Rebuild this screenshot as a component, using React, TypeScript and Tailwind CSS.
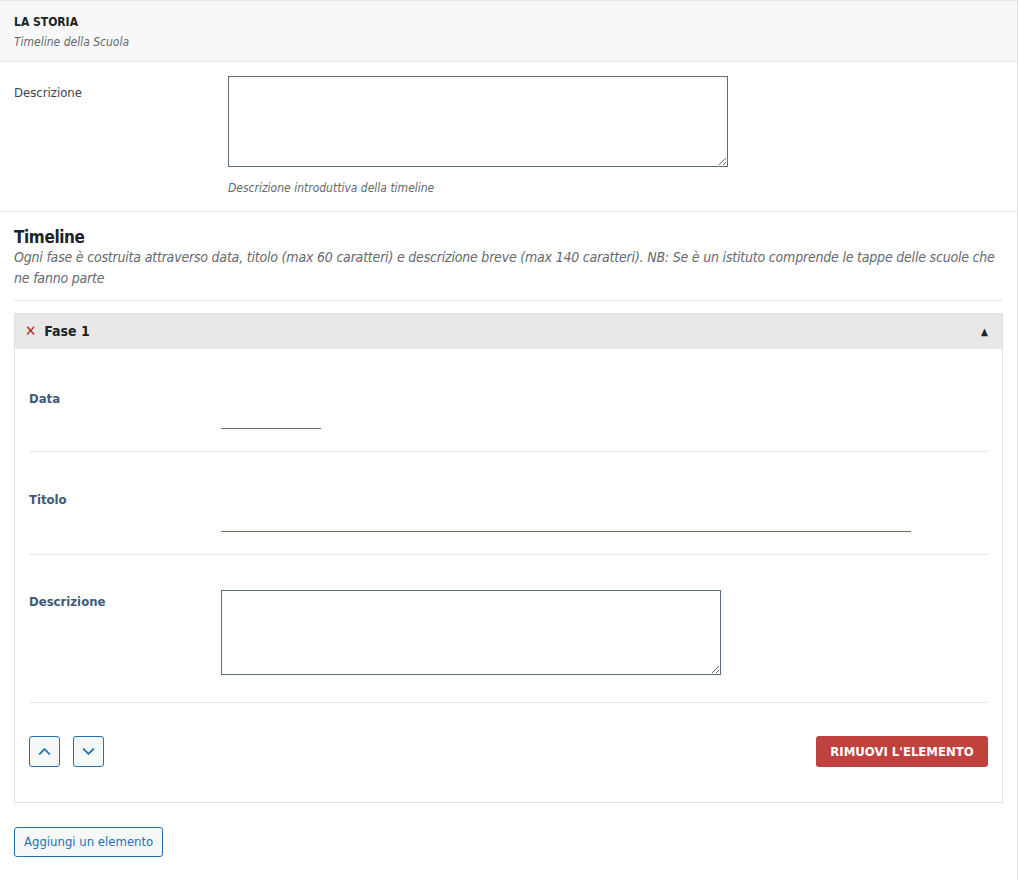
import { ChevronUp, ChevronDown } from "lucide-react";

const font = "font-['Tahoma','DejaVu_Sans_Condensed','DejaVu_Sans',sans-serif]";

export default function App() {
  return (
    <div className={`${font} w-[1018px] bg-white text-[13px] text-[#3c434a]`}>
      <div className="border-t border-r border-[#e5e5e5]">
        {/* section header */}
        <div className="h-[61px] border-b border-[#e5e5e5] bg-[#f8f8f8] px-[14px] pt-[13px]">
          <div className="text-[12px] font-bold leading-[16px] text-[#1d2327]">LA STORIA</div>
          <div className="mt-[4px] text-[12px] italic leading-[16px] text-[#646970]">Timeline della Scuola</div>
        </div>

        {/* descrizione */}
        <div className="flex border-b border-[#e5e5e5] px-[14px] pt-[14px] pb-[14px]">
          <div className="w-[214px] shrink-0 pt-[7px] text-[13px] text-[#3c434a]">Descrizione</div>
          <div>
            <textarea className="block h-[91px] w-[500px] rounded-none border border-[#5b6d85] bg-white" />
            <p className="mt-[12px] text-[12px] italic text-[#646970]">Descrizione introduttiva della timeline</p>
          </div>
        </div>

        {/* timeline */}
        <div className="px-[14px] pt-[15px] pb-[22px]">
          <h2 className="text-[17px] font-bold leading-[20px] tracking-[-0.4px] text-[#1d2327]">
            Timeline
          </h2>
          <p className="text-[14px] italic leading-[21px] tracking-[-0.2px] text-[#646970]">
            Ogni fase è costruita attraverso data, titolo (max 60 caratteri) e descrizione breve (max 140 caratteri). NB: Se è un istituto comprende le tappe delle scuole che ne fanno parte
          </p>
          <div className="mt-[11px] border-t border-[#e5e5e5]" />

          {/* element */}
          <div className="mt-[12px] w-[989px] border border-[#e0e0e0]">
            <div className="flex h-[35px] items-center bg-[#e8e8e8] px-[10px]">
              <span className="text-[15px] font-bold leading-none text-[#b32d2e]">✕</span>
              <span className="ml-[8px] text-[14px] font-bold text-[#1d2327]">Fase 1</span>
              <span className="ml-auto mr-[4px] text-[10px] text-[#1d2327]">▲</span>
            </div>
            <div className="px-[14px]">
              <div className="flex h-[103px] border-b border-[#e8e8e8]">
                <div className="w-[192px] shrink-0 pt-[40px] text-[13px] font-bold text-[#3e5a76]">Data</div>
                <div className="pt-[79px]">
                  <div className="w-[100px] border-b border-[#5b6d85]" />
                </div>
              </div>
              <div className="flex h-[103px] border-b border-[#e8e8e8]">
                <div className="w-[192px] shrink-0 pt-[38px] text-[13px] font-bold text-[#3e5a76]">Titolo</div>
                <div className="pt-[79px]">
                  <div className="w-[690px] border-b border-[#5b6d85]" />
                </div>
              </div>
              <div className="flex h-[148px] border-b border-[#e8e8e8]">
                <div className="w-[192px] shrink-0 pt-[37px] text-[13px] font-bold text-[#3e5a76]">Descrizione</div>
                <div className="pt-[35px]">
                  <textarea className="block h-[85px] w-[500px] rounded-none border border-[#5b6d85] bg-white" />
                </div>
              </div>
              <div className="flex items-center pt-[33px] pb-[35px]">
                <button className="flex h-[31px] w-[31px] items-center justify-center rounded-[3px] border border-[#2271b1] bg-[#f6f7f7] text-[#2271b1]">
                  <ChevronUp size={19} strokeWidth={2.4} />
                </button>
                <button className="ml-[13px] flex h-[31px] w-[31px] items-center justify-center rounded-[3px] border border-[#2271b1] bg-[#f6f7f7] text-[#2271b1]">
                  <ChevronDown size={19} strokeWidth={2.4} />
                </button>
                <button className="ml-auto h-[31px] w-[172px] rounded-[3px] bg-[#c0423f] text-[13px] font-bold text-white">
                  RIMUOVI L'ELEMENTO
                </button>
              </div>
            </div>
          </div>

          <button className="mt-[24px] h-[30px] rounded-[3px] border border-[#2271b1] bg-[#f6f7f7] px-[9px] text-[13px] text-[#2271b1]">
            Aggiungi un elemento
          </button>
        </div>
      </div>
    </div>
  );
}
